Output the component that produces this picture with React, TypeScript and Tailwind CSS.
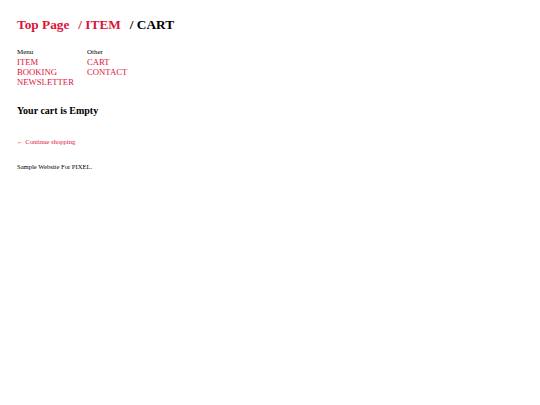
export default function App() {
  return (
    <div className="px-[17px] pt-[16px] text-black font-['Liberation_Serif','Times_New_Roman',serif]">
      <h1 className="flex gap-[9px] text-[13.3px] font-bold leading-[18px]">
        <a className="text-[#dc143c]">Top Page</a>
        <a className="text-[#dc143c]">/ ITEM</a>
        <span>/ CART</span>
      </h1>
      <div className="mt-[14px] flex">
        <div className="w-[70px]">
          <div className="text-[7px] leading-[9px]">Menu</div>
          <div className="text-[8.7px] leading-[10px] text-[#dc143c]">ITEM</div>
          <div className="text-[8.7px] leading-[10px] text-[#dc143c]">BOOKING</div>
          <div className="text-[8.7px] leading-[10px] text-[#dc143c]">NEWSLETTER</div>
        </div>
        <div>
          <div className="text-[7px] leading-[9px]">Other</div>
          <div className="text-[8.7px] leading-[10px] text-[#dc143c]">CART</div>
          <div className="text-[8.7px] leading-[10px] text-[#dc143c]">CONTACT</div>
        </div>
      </div>
      <h2 className="mt-[17px] text-[10px] font-bold leading-[14px]">Your cart is Empty</h2>
      <div className="mt-[19px] text-[6.6px] leading-[9px] text-[#dc143c]">← Continue shopping</div>
      <div className="mt-[16px] text-[6.6px] leading-[9px]">Sample Website For PIXEL.</div>
    </div>
  );
}
